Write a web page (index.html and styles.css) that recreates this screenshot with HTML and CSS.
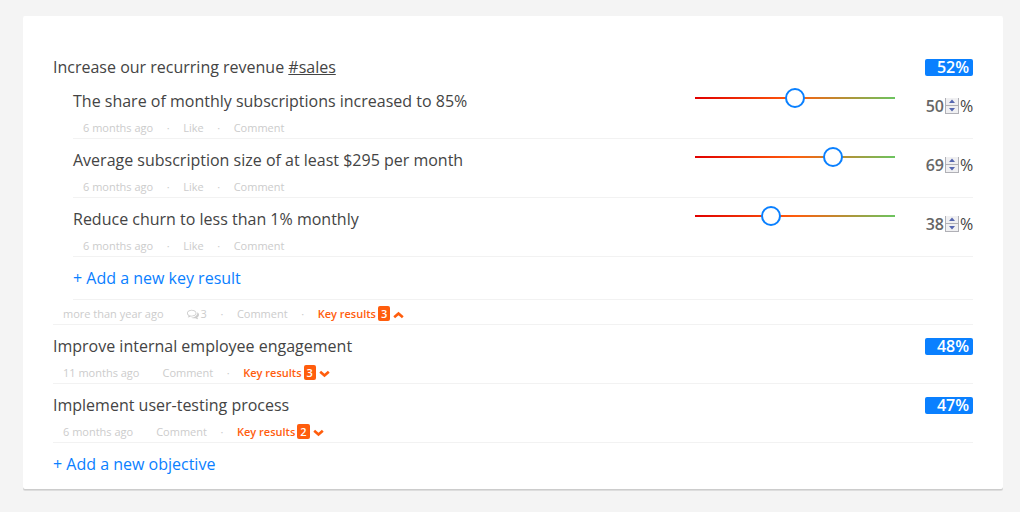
FILE: index.html
```html
<!doctype html>
<html lang="en">

<head>
  <meta charset="UTF-8">
  <meta name="viewport" content="width=device-width, initial-scale=1.0">
  <title>Objectives</title>
  <link rel="stylesheet" href="styles.css">
</head>

<body>
  <!-- shared icons -->
  <svg class="sprite" aria-hidden="true">
    <symbol id="icon-up" viewBox="0 0 11 8">
      <path d="M1.200 6.300L5.500 2.500L9.800 6.300" fill="none" stroke="currentColor" stroke-width="2.600" />
    </symbol>
    <symbol id="icon-down" viewBox="0 0 11 8">
      <path d="M1.200 1.700L5.500 5.500L9.800 1.700" fill="none" stroke="currentColor" stroke-width="2.600" />
    </symbol>
    <symbol id="icon-comments" viewBox="0 0 1792 1792">
      <path fill="currentColor" d="M704 384q-153 0-286 52t-211.500 141-78.500 191q0 82 53 158t149 132l97 56-35 84q34-20 62-39l44-31 53 10q78 14 153 14 153 0 286-52t211.500-141 78.500-191-78.500-191-211.500-141-286-52zm0-128q191 0 353.500 68.500t256.500 186.500 94 257-94 257-256.500 186.500-353.500 68.500q-86 0-176-16-124 88-278 128-36 9-86 16h-3q-11 0-20.500-8t-11.500-21q-1-3-1-6.500t.5-6.500 2-6l2.500-5 3.500-5.500 4-5 4.500-5 4-4.500q5-6 23-25t26-29.500 22.500-29 25-38.500 20.500-44q-124-72-195-177t-71-224q0-139 94-257t256.500-186.500 353.500-68.500zm822 1169q10 24 20.500 44t25 38.500 22.500 29 26 29.500 23 25q1 1 4 4.500t4.500 5 4 5 3.500 5.500l2.500 5 2 6 .5 6.500-1 6.500q-3 14-13 22t-22 7q-50-7-86-16-154-40-278-128-90 16-176 16-271 0-472-132 58 4 88 4 161 0 309-45t264-129q125-92 192-212t67-254q0-77-23-152 129 71 204 178t75 230q0 120-71 224.500t-195 176.500z" />
    </symbol>
    <symbol id="icon-step-up" viewBox="0 0 12 7">
      <path d="M6 1.500L9 5H3Z" fill="#5566B0" />
    </symbol>
    <symbol id="icon-step-down" viewBox="0 0 12 7">
      <path d="M3 2H9L6 5.500Z" fill="#5566B0" />
    </symbol>
  </svg>

  <main class="card">
    <section class="objective">
      <div class="objective__head">
        <h2 class="title">Increase our recurring revenue <a class="title__tag" href="#sales">#sales</a></h2>
        <span class="objective__score">52%</span>
      </div>

      <ul class="results">
        <li class="result">
          <div class="result__body">
            <h3 class="title" id="result-one">The share of monthly subscriptions increased to 85%</h3>
            <div class="meta">
              <span class="meta__item">6 months ago</span>
              <span class="meta__dot">·</span>
              <a class="meta__item" href="#">Like</a>
              <span class="meta__dot">·</span>
              <a class="meta__item" href="#">Comment</a>
            </div>
          </div>
          <input class="slider" type="range" min="0" max="100" value="50" aria-labelledby="result-one">
          <div class="percent">
            <input class="percent__input" type="text" inputmode="numeric" value="50" aria-labelledby="result-one">
            <span class="stepper">
              <button class="stepper__button" type="button" aria-label="Increase"><svg class="stepper__icon"><use href="#icon-step-up" /></svg></button>
              <button class="stepper__button" type="button" aria-label="Decrease"><svg class="stepper__icon"><use href="#icon-step-down" /></svg></button>
            </span>
            <span>%</span>
          </div>
        </li>
        <li class="result">
          <div class="result__body">
            <h3 class="title" id="result-two">Average subscription size of at least $295 per month</h3>
            <div class="meta">
              <span class="meta__item">6 months ago</span>
              <span class="meta__dot">·</span>
              <a class="meta__item" href="#">Like</a>
              <span class="meta__dot">·</span>
              <a class="meta__item" href="#">Comment</a>
            </div>
          </div>
          <input class="slider" type="range" min="0" max="100" value="69" aria-labelledby="result-two">
          <div class="percent">
            <input class="percent__input" type="text" inputmode="numeric" value="69" aria-labelledby="result-two">
            <span class="stepper">
              <button class="stepper__button" type="button" aria-label="Increase"><svg class="stepper__icon"><use href="#icon-step-up" /></svg></button>
              <button class="stepper__button" type="button" aria-label="Decrease"><svg class="stepper__icon"><use href="#icon-step-down" /></svg></button>
            </span>
            <span>%</span>
          </div>
        </li>
        <li class="result">
          <div class="result__body">
            <h3 class="title" id="result-three">Reduce churn to less than 1% monthly</h3>
            <div class="meta">
              <span class="meta__item">6 months ago</span>
              <span class="meta__dot">·</span>
              <a class="meta__item" href="#">Like</a>
              <span class="meta__dot">·</span>
              <a class="meta__item" href="#">Comment</a>
            </div>
          </div>
          <input class="slider" type="range" min="0" max="100" value="38" aria-labelledby="result-three">
          <div class="percent">
            <input class="percent__input" type="text" inputmode="numeric" value="38" aria-labelledby="result-three">
            <span class="stepper">
              <button class="stepper__button" type="button" aria-label="Increase"><svg class="stepper__icon"><use href="#icon-step-up" /></svg></button>
              <button class="stepper__button" type="button" aria-label="Decrease"><svg class="stepper__icon"><use href="#icon-step-down" /></svg></button>
            </span>
            <span>%</span>
          </div>
        </li>
        <li class="results__add">
          <a class="add" href="#">+ Add a new key result</a>
        </li>
      </ul>

      <div class="meta meta--open">
        <span class="meta__item">more than year ago</span>
        <a class="meta__item" href="#"><svg class="meta__comments"><use href="#icon-comments" /></svg>3</a>
        <span class="meta__dot">·</span>
        <a class="meta__item" href="#">Comment</a>
        <span class="meta__dot">·</span>
        <a class="meta__item meta__toggle" href="#">Key results <span class="badge">3</span><svg class="chevron"><use href="#icon-up" /></svg></a>
      </div>
    </section>

    <section class="objective">
      <div class="objective__head">
        <h2 class="title">Improve internal employee engagement</h2>
        <span class="objective__score">48%</span>
      </div>
      <div class="meta">
        <span class="meta__item">11 months ago</span>
        <a class="meta__item" href="#">Comment</a>
        <span class="meta__dot">·</span>
        <a class="meta__item meta__toggle" href="#">Key results <span class="badge">3</span><svg class="chevron"><use href="#icon-down" /></svg></a>
      </div>
    </section>

    <section class="objective">
      <div class="objective__head">
        <h2 class="title">Implement user-testing process</h2>
        <span class="objective__score">47%</span>
      </div>
      <div class="meta">
        <span class="meta__item">6 months ago</span>
        <a class="meta__item" href="#">Comment</a>
        <span class="meta__dot">·</span>
        <a class="meta__item meta__toggle" href="#">Key results <span class="badge">2</span><svg class="chevron"><use href="#icon-down" /></svg></a>
      </div>
    </section>

    <a class="add" href="#">+ Add a new objective</a>
  </main>
</body>

</html>
```
FILE: styles.css
```css
:root {
  --blue: #0A80FF;
  --orange: #FF5D0D;
  --text-color: #444;
  --muted-color: #CCC;
  --line-color: #F2F2F2;
}

/* Box sizing rules */
*,
*::before,
*::after {
  box-sizing: border-box;
}

/* Remove default margin */
body,
h2,
h3,
ul {
  margin: 0;
}

body {
  padding: 16px 17px 22px 23px;
  background-color: #F4F4F4;
  color: var(--text-color);
  font-family: 'Open Sans', 'Noto Sans', sans-serif;
  font-size: 16px;
  line-height: 22px;
}

a {
  color: inherit;
  text-decoration: none;
}

input,
button {
  font: inherit;
}

.sprite {
  display: none;
}

.card {
  padding: 30px 30px 4px;
  border-radius: 2px;
  background-color: #FFF;
  box-shadow: 0 1px 0 #CCC, 0 2px 0 #DDD;
}

.title {
  font-size: 16px;
  font-weight: 400;
}

.title__tag {
  text-decoration: underline;
}

.add {
  display: block;
  padding: 10px 0;
  color: var(--blue);
}

/* Objectives */
.objective {
  border-bottom: 1px solid var(--line-color);
}

.objective__head {
  display: flex;
  align-items: center;
  justify-content: space-between;
  padding-top: 10px;
}

.objective__score {
  width: 48px;
  padding-right: 4px;
  border-radius: 2px;
  background-color: var(--blue);
  color: #FFF;
  font-weight: 600;
  line-height: 17px;
  text-align: right;
}

/* Key results */
.results {
  margin: 2px 0 0 20px;
  padding: 0;
  list-style: none;
}

.result {
  display: flex;
  align-items: flex-start;
  border-bottom: 1px solid var(--line-color);
}

.result__body {
  flex: 1;
  padding-top: 10px;
}

.results__add {
  border-bottom: 1px solid var(--line-color);
}

/* Meta line below a title */
.meta {
  display: flex;
  align-items: center;
  gap: 3px;
  margin-top: 6px;
  color: var(--muted-color);
  font-size: 11px;
  line-height: 20px;
}

.meta--open {
  margin-top: 4px;
}

.meta__item {
  display: flex;
  align-items: center;
  padding: 0 10px;
}

.meta__dot {
  width: 4px;
  text-align: center;
}

.meta__comments {
  width: 12px;
  height: 12px;
  margin-right: 2px;
}

.meta__toggle {
  gap: 2px;
  color: var(--orange);
  font-weight: 600;
}

.badge {
  margin-bottom: 1px;
  padding: 0 3px;
  border-radius: 2px;
  background-color: var(--orange);
  color: #FFF;
  line-height: 15px;
}

.chevron {
  width: 11px;
  height: 8px;
  margin: 2px 0 0 1px;
}

/* the track is inset by half a thumb, so the thumb centre spans all of it */
.slider {
  appearance: none;
  width: 220px;
  height: 20px;
  margin: 8px 20px 0 0;
  background: linear-gradient(to right, #E00000, #FF5D0D 50%, #6BC45F) center / 200px 2px no-repeat;
}

.slider::-webkit-slider-thumb {
  appearance: none;
  width: 20px;
  height: 20px;
  border: 2px solid var(--blue);
  border-radius: 50%;
  background-color: #FFF;
}

.percent {
  display: flex;
  align-items: center;
  width: 48px;
  margin-top: 15px;
}

.percent__input {
  width: 20px;
  padding: 0 1px 0 0;
  border: none;
  background-color: transparent;
  color: #666;
  font-weight: 600;
  text-align: right;
}

.stepper {
  display: flex;
  flex-direction: column;
  width: 14px;
  margin-right: 1px;
}

.stepper__button {
  display: flex;
  height: 8px;
  padding: 0;
  border: 1px solid #B0B0B6;
  border-top: none;
  background-color: #F0F0F2;
}

.stepper__icon {
  width: 12px;
  height: 7px;
}
```
